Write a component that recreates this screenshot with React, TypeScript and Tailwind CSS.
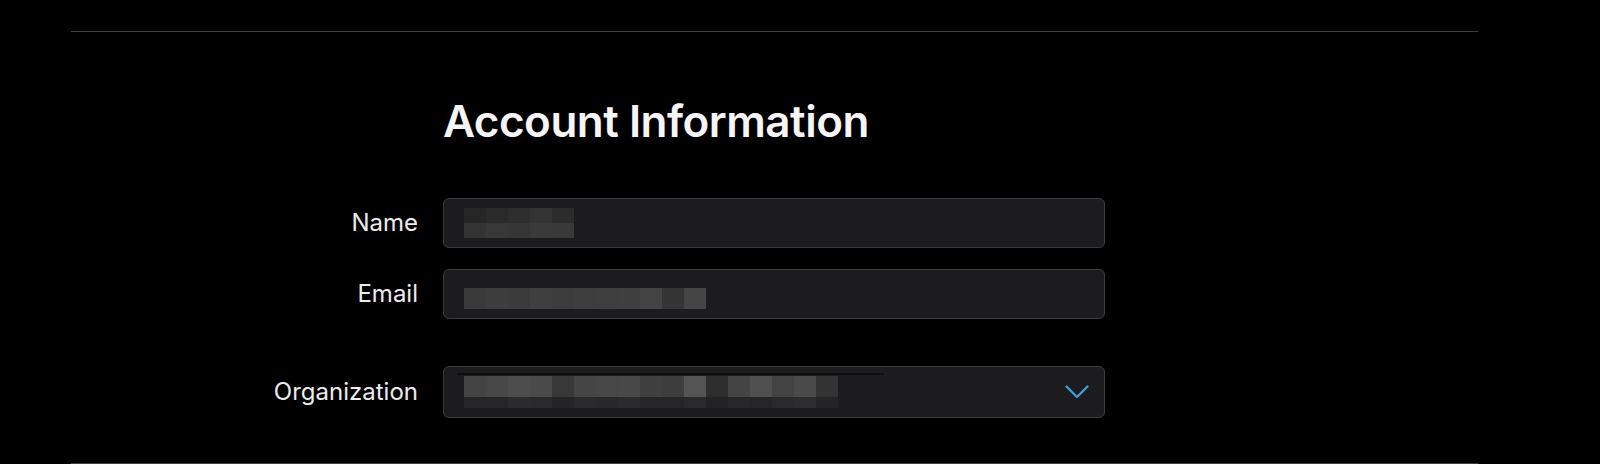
const nameTop = ["#262626", "#2a2a2a", "#2d2d2d", "#343434", "#2c2c2c"];
const nameBottom = ["#343434", "#383838", "#363636", "#3a3a3a", "#393939"];
const emailRow = ["#3a3a3a", "#3d3d3d", "#3b3b3b", "#404040", "#3c3c3c", "#3e3e3e", "#3f3f3f", "#404040", "#444444", "#353535", "#454545"];
const orgRow = ["#444444", "#474747", "#4d4d4d", "#4a4a4a", "#383838", "#454545", "#474747", "#484848", "#404040", "#3d3d3d", "#555555", "#2e2e2e", "#444444", "#505050", "#434343", "#4a4a4a", "#333333"];
const orgFaint = ["#262626", "#262626", "#2b2b2b", "#2a2a2a", "#242424", "#2a2a2a", "#282828", "#2b2b2b", "#262626", "#262626", "#2a2a2a", "#222222", "#282828", "#262626", "#2a2a2a", "#2d2d2d", "#242424"];

function Blocks({ shades, h }: { shades: string[]; h: string }) {
  return (
    <div className="flex">
      {shades.map((c, i) => (
        <div key={i} className={`w-[22px] ${h}`} style={{ backgroundColor: c }} />
      ))}
    </div>
  );
}

function Row({ label, className, children }: { label: string; className: string; children: React.ReactNode }) {
  return (
    <div className={`flex items-center gap-x-[25px] ${className}`}>
      <div className="w-[347px] text-right text-[24px] leading-none text-[#ececec]">{label}</div>
      {children}
    </div>
  );
}

export default function App() {
  return (
    <div
      className="bg-black w-full h-[464px] overflow-hidden pt-[31px]"
      style={{ fontFamily: "Inter, 'Noto Sans', sans-serif" }}
    >
      <div className="ml-[71px] w-[1407px] h-[433px] border-y border-[#3e3e3e]">
        <h1 className="ml-[372px] mt-[67px] text-[44px] leading-none font-semibold tracking-[-0.5px] text-[#f5f5f5]">
          Account Information
        </h1>

        <Row label="Name" className="mt-[55px]">
          <div className="w-[662px] h-[50px] rounded-md border border-[#3c3c3e] bg-[#1c1c1e] pl-[20px] pt-[9px]">
            <Blocks shades={nameTop} h="h-[15px]" />
            <Blocks shades={nameBottom} h="h-[15px]" />
          </div>
        </Row>

        <Row label="Email" className="mt-[21px]">
          <div className="w-[662px] h-[50px] rounded-md border border-[#3c3c3e] bg-[#1c1c1e] pl-[20px] pt-[18px]">
            <Blocks shades={emailRow} h="h-[21px]" />
          </div>
        </Row>

        <Row label="Organization" className="mt-[47px]">
          <div className="w-[662px] h-[52px] rounded-md border border-[#3c3c3e] bg-[#1c1c1e] flex items-center justify-between pr-[15px]">
            <div className="pl-[13px] pt-[6px] self-start">
              <div className="h-[2px] w-[427px] bg-[#0e0e0e]" />
              <div className="pl-[7px] pt-[1px]">
                <Blocks shades={orgRow} h="h-[21px]" />
                <Blocks shades={orgFaint} h="h-[11px]" />
              </div>
            </div>
            <svg width="24" height="14" viewBox="0 0 24 14" fill="none">
              <path d="M1.5 1.5 L12 12 L22.5 1.5" stroke="#3b9fd6" strokeWidth="2.4" strokeLinecap="round" strokeLinejoin="round" />
            </svg>
          </div>
        </Row>
      </div>
    </div>
  );
}
